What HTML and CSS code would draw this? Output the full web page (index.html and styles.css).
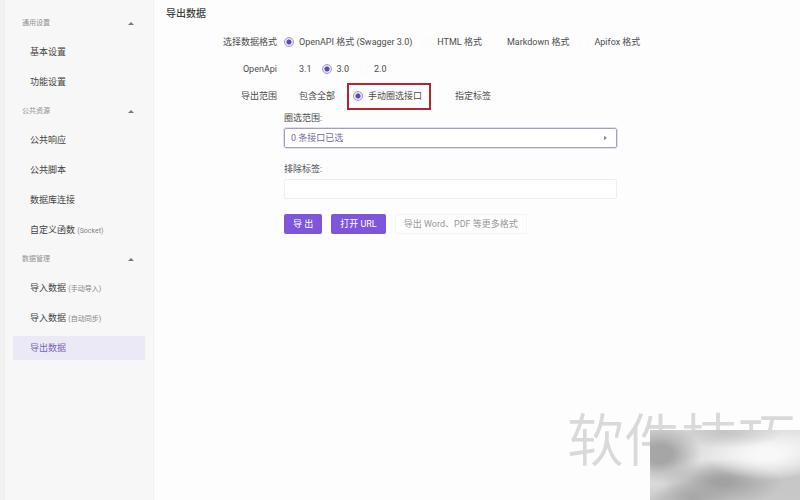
FILE: index.html
```html
<!DOCTYPE html>
<html lang="zh-CN">
<head>
<meta charset="utf-8">
<title>导出数据</title>
<link rel="stylesheet" href="styles.css">
</head>
<body>
<div class="app">
  <nav class="sidebar">
    <button class="group" type="button">通用设置<svg class="caret" viewBox="0 0 6 4"><path d="M0 4L3 1L6 4Z"/></svg></button>
    <a class="item" href="#">基本设置</a>
    <a class="item" href="#">功能设置</a>
    <button class="group" type="button">公共资源<svg class="caret" viewBox="0 0 6 4"><path d="M0 4L3 1L6 4Z"/></svg></button>
    <a class="item" href="#">公共响应</a>
    <a class="item" href="#">公共脚本</a>
    <a class="item" href="#">数据库连接</a>
    <a class="item" href="#">自定义函数 <small>(Socket)</small></a>
    <button class="group" type="button">数据管理<svg class="caret" viewBox="0 0 6 4"><path d="M0 4L3 1L6 4Z"/></svg></button>
    <a class="item" href="#">导入数据 <small>(手动导入)</small></a>
    <a class="item" href="#">导入数据 <small>(自动同步)</small></a>
    <a class="item active" href="#">导出数据</a>
  </nav>
  <main class="main">
    <h1>导出数据</h1>
    <form class="form">
      <div class="row" role="radiogroup" aria-labelledby="l-format">
        <span class="row-label" id="l-format">选择数据格式</span>
        <div class="options">
          <label><input type="radio" name="format" checked>OpenAPI 格式 (Swagger 3.0)</label>
          <label><input type="radio" name="format">HTML 格式</label>
          <label><input type="radio" name="format">Markdown 格式</label>
          <label><input type="radio" name="format">Apifox 格式</label>
        </div>
      </div>
      <div class="row" role="radiogroup" aria-labelledby="l-version">
        <span class="row-label" id="l-version">OpenApi</span>
        <div class="options">
          <label><input type="radio" name="version">3.1</label>
          <label><input type="radio" name="version" checked>3.0</label>
          <label><input type="radio" name="version">2.0</label>
        </div>
      </div>
      <div class="row" role="radiogroup" aria-labelledby="l-scope">
        <span class="row-label" id="l-scope">导出范围</span>
        <div class="options wide">
          <label><input type="radio" name="scope">包含全部</label>
          <label class="marked"><input type="radio" name="scope" checked>手动圈选接口</label>
          <label><input type="radio" name="scope">指定标签</label>
        </div>
      </div>
      <div class="fields">
        <label class="field-label" for="range">圈选范围:</label>
        <div class="picker">
          <select id="range"><option>0 条接口已选</option></select>
          <svg class="arrow" viewBox="0 0 4 6"><path d="M0 0L4 3L0 6Z"/></svg>
        </div>
        <label class="field-label" for="exclude">排除标签:</label>
        <input class="text" id="exclude" type="text">
        <div class="actions">
          <button class="primary" type="button">导 出</button>
          <button class="primary" type="button">打开 URL</button>
          <button class="plain" type="button">导出 Word、PDF 等更多格式</button>
        </div>
      </div>
    </form>
  </main>
</div>
<div class="watermark">软件技巧</div>
<div class="patch"></div>
</body>
</html>
```

FILE: styles.css
```css
* { box-sizing: border-box; }
body {
  margin: 0;
  overflow: hidden;
  background: #fdfdfd;
  color: #4c4c4c;
  font: 9px/20px Roboto, "Noto Sans CJK SC", sans-serif;
}
button, input, select { font: inherit; }
.app { display: flex; min-height: 100vh; }
.sidebar {
  display: flex;
  flex: none;
  flex-direction: column;
  gap: 6px;
  width: 154px;
  padding: 12px 8px;
  border-left: 5px solid #f1f1f1;
  border-right: 1px solid #f1f1f1;
  background: #f7f7f7;
}
.group {
  display: flex;
  align-items: center;
  justify-content: space-between;
  height: 22px;
  padding: 0 11px 0 9px;
  border: 0;
  background: none;
  color: #929292;
  font-size: 7px;
}
.caret { width: 6px; height: 4px; fill: #777; }
.item {
  height: 24px;
  padding: 0 17px;
  border-radius: 2px;
  color: #444;
  line-height: 24px;
  text-decoration: none;
  white-space: nowrap;
}
.item small { color: #858585; font-size: 7px; }
.active { background: #ebe9f5; color: #7663bd; }
.main { flex: 1; min-width: 0; padding: 4px 12px; }
h1 { margin: 0; color: #404040; font-size: 10px; font-weight: 500; line-height: 20px; }
.form { padding-top: 8px; }
.row { display: flex; gap: 7px; margin-bottom: 7px; }
.row-label { flex: none; width: 111px; text-align: right; }
.options { display: flex; gap: 10px; white-space: nowrap; }
.wide { gap: 18px; }
.options label { display: flex; align-items: center; gap: 5px; }
.options input {
  width: 10px;
  height: 10px;
  margin: 0;
  border: 1px solid #fbfbfb;
  border-radius: 50%;
  appearance: none;
}
.options input:checked {
  border-color: #a398cf;
  background: radial-gradient(circle, #5f4ba5 0 2px, #e9e4f8 3px);
}
.marked { position: relative; }
.marked::after {
  position: absolute;
  inset: -3px -9px -4px -6px;
  border: 2px solid #b3262f;
  content: "";
}
.fields { max-width: 451px; margin-top: -5px; padding-left: 118px; }
.field-label { display: block; }
.picker { position: relative; margin-bottom: 11px; }
.picker select {
  display: block;
  width: 100%;
  height: 20px;
  padding: 0 6px;
  border: 1px solid #a59fba;
  border-radius: 2px;
  outline: 1px solid #e2deee;
  background: #fff;
  color: #7569a5;
  line-height: 18px;
  appearance: none;
}
.arrow { position: absolute; top: 7px; right: 10px; width: 3px; height: 6px; fill: #8b87a0; }
.text {
  display: block;
  width: 100%;
  height: 20px;
  padding: 0 6px;
  border: 1px solid #efefef;
  border-radius: 2px;
  background: #fff;
}
.actions { display: flex; gap: 9px; margin-top: 15px; }
.actions button { height: 20px; padding: 0 9px; border: 0; border-radius: 2px; line-height: 20px; white-space: nowrap; }
.actions .primary { background: #7f56d9; color: #fff; }
.actions .plain { border: 1px solid #f4f4f4; background: #fefefe; color: #969696; line-height: 18px; padding: 0 8px; }
.watermark {
  position: absolute;
  right: 5px;
  bottom: 18px;
  color: #d9d9d9;
  font-size: 57px;
  font-weight: 350;
  line-height: 80px;
}
.patch {
  position: absolute;
  right: 0;
  bottom: 0;
  width: 150px;
  height: 70px;
  background:
    radial-gradient(ellipse 42px 30px at 10px 24px, #a6a6a6 30%, transparent),
    radial-gradient(ellipse 60px 16px at 75px 2px, #c4c4c4, transparent),
    radial-gradient(ellipse 64px 26px at 118px 24px, #f8f8f8 20%, transparent),
    radial-gradient(ellipse 60px 24px at 72px 52px, #a2a2a2 15%, transparent),
    radial-gradient(ellipse 40px 16px at 42px 68px, #a6a6a6, transparent),
    linear-gradient(170deg, #d8d8d8, #e6e6e6 45%, #c6c6c6 75%, #c8c8c8);
}
```
